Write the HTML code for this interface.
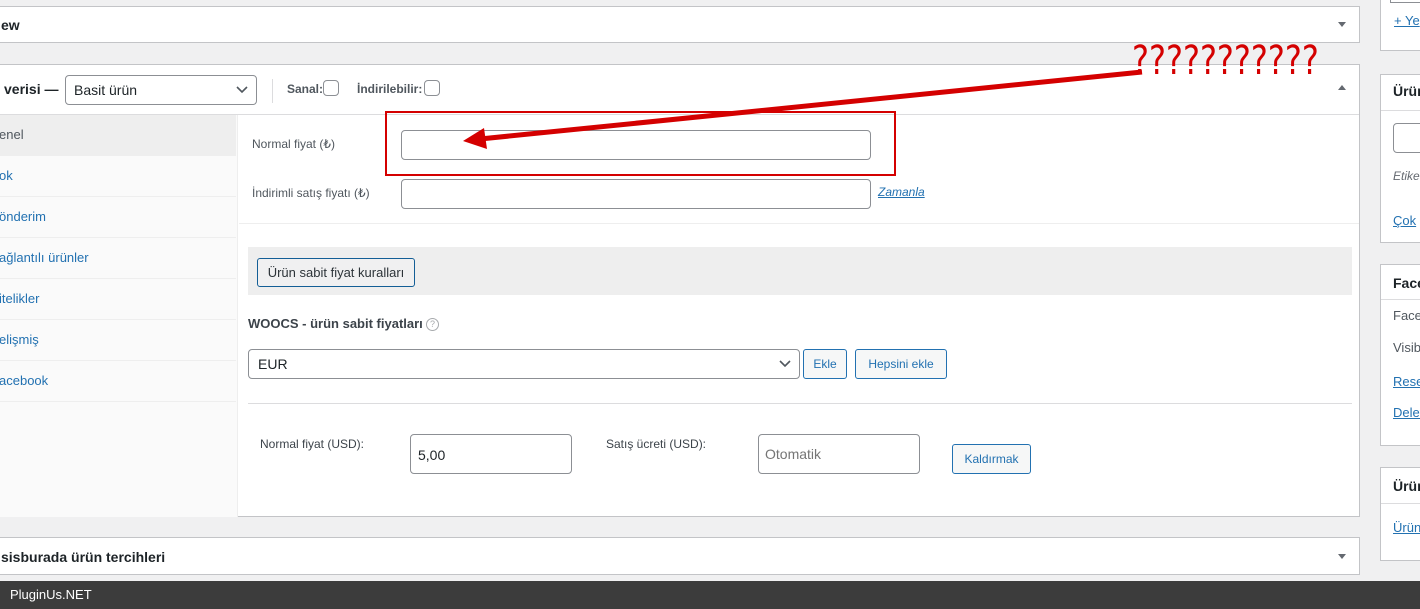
<!DOCTYPE html>
<html><head><meta charset="utf-8"><style>
*{box-sizing:border-box;margin:0;padding:0}
body{width:1420px;height:609px;background:#f0f0f1;font-family:"Liberation Sans",sans-serif;font-size:13px;color:#1d2327;position:relative;overflow:hidden}
.abs{position:absolute}
.panel{position:absolute;background:#fff;border:1px solid #c3c4c7}
.tri-d{width:0;height:0;border-left:4px solid transparent;border-right:4px solid transparent;border-top:5px solid #646970}
.tri-u{width:0;height:0;border-left:4px solid transparent;border-right:4px solid transparent;border-bottom:5px solid #646970}
.inp{position:absolute;background:#fff;border:1px solid #8c8f94;border-radius:4px}
.lbl{position:absolute;font-size:12px;color:#50575e}
.tab{position:absolute;left:0;width:237px;height:41px;border-bottom:1px solid #eee;color:#2271b1;font-size:13px;line-height:40px}
.btn{position:absolute;border:1px solid #2271b1;border-radius:3px;color:#2271b1;background:#f6f7f7;font-size:12px;text-align:center}
a{color:#2271b1;text-decoration:underline}
.cb{position:absolute;width:16px;height:16px;border:1px solid #8c8f94;border-radius:4px;background:#fff}
.side{position:absolute;left:1380px;width:44px;background:#fff;border:1px solid #c3c4c7}
</style></head><body>
<div class="panel" style="left:-2px;top:6px;width:1362px;height:37px"><span class="abs" style="left:2px;top:10px;font-size:14px;font-weight:bold">ew</span><div class="tri-d abs" style="left:1339px;top:15px"></div></div>

<div class="panel" style="left:-2px;top:64px;width:1362px;height:453px">
<div class="abs" style="left:0;top:49px;width:1360px;border-top:1px solid #dcdcde"></div>
<span class="abs" style="left:5px;top:16px;font-size:14px;font-weight:bold">verisi —</span>
<div class="inp" style="left:66px;top:10px;width:192px;height:30px;font-size:14px;padding:6px 8px">Basit ürün<svg class="abs" style="right:8px;top:10px" width="12" height="8"><path d="M1 1l5 5 5-5" stroke="#50575e" stroke-width="1.6" fill="none"/></svg></div>
<div class="abs" style="left:273px;top:14px;height:24px;border-left:1px solid #dcdcde"></div>
<span class="abs" style="left:288px;top:17px;font-size:12px;font-weight:bold;color:#50575e">Sanal:</span><div class="cb" style="left:324px;top:15px"></div>
<span class="abs" style="left:358px;top:17px;font-size:12px;font-weight:bold;color:#50575e">İndirilebilir:</span><div class="cb" style="left:425px;top:15px"></div>
<div class="tri-u abs" style="left:1339px;top:20px"></div>
<div class="abs" style="left:0;top:50px;width:239px;height:402px;background:#fafafa;border-right:1px solid #eee"></div>
<div class="tab" style="top:50px;background:#eee;color:#50575e">enel</div>
<div class="tab" style="top:91px">ok</div>
<div class="tab" style="top:132px">önderim</div>
<div class="tab" style="top:173px">ağlantılı ürünler</div>
<div class="tab" style="top:214px">itelikler</div>
<div class="tab" style="top:255px">elişmiş</div>
<div class="tab" style="top:296px">acebook</div>
<div class="lbl" style="left:253px;top:72px">Normal fiyat (₺)</div>
<div class="inp" style="left:402px;top:65px;width:470px;height:30px"></div>
<div class="lbl" style="left:253px;top:121px">İndirimli satış fiyatı (₺)</div>
<div class="inp" style="left:402px;top:114px;width:470px;height:30px"></div>
<a class="abs" style="left:879px;top:120px;font-size:12px;font-style:italic">Zamanla</a>
<div class="abs" style="left:240px;top:158px;width:1120px;border-top:1px solid #eee"></div>
<div class="abs" style="left:249px;top:182px;width:1104px;height:48px;background:#eeeeee"></div>
<div class="btn" style="left:258px;top:193px;width:158px;height:29px;line-height:27px;border-color:#135e96;color:#2c3338;background:#f0f0f1;font-size:13px">Ürün sabit fiyat kuralları</div>
<div class="abs" style="left:249px;top:251px;font-size:13px;font-weight:bold;color:#3c434a">WOOCS - ürün sabit fiyatları</div>
<div class="abs" style="left:427px;top:253px;width:13px;height:13px;border:1px solid #a7aaad;border-radius:50%;font-size:9px;color:#a7aaad;text-align:center;line-height:11px">?</div>
<div class="inp" style="left:249px;top:284px;width:552px;height:30px;font-size:14px;padding:6px 9px">EUR<svg class="abs" style="right:8px;top:10px" width="12" height="8"><path d="M1 1l5 5 5-5" stroke="#50575e" stroke-width="1.6" fill="none"/></svg></div>
<div class="btn" style="left:804px;top:284px;width:44px;height:30px;line-height:28px">Ekle</div>
<div class="btn" style="left:856px;top:284px;width:92px;height:30px;line-height:28px">Hepsini ekle</div>
<div class="abs" style="left:249px;top:338px;width:1104px;border-top:1px solid #dcdcde"></div>
<div class="lbl" style="left:261px;top:372px;color:#3c434a">Normal fiyat (USD):</div>
<div class="inp" style="left:411px;top:369px;width:162px;height:40px;font-size:14px;padding:12px 7px">5,00</div>
<div class="lbl" style="left:607px;top:372px;color:#3c434a">Satış ücreti (USD):</div>
<div class="inp" style="left:759px;top:369px;width:162px;height:40px;font-size:14px;padding:11px 6px;color:#757575">Otomatik</div>
<div class="btn" style="left:953px;top:379px;width:79px;height:30px;line-height:28px">Kaldırmak</div>
</div>

<div class="panel" style="left:-2px;top:537px;width:1362px;height:38px"><span class="abs" style="left:2px;top:11px;font-size:14px;font-weight:bold">sisburada ürün tercihleri</span><div class="tri-d abs" style="left:1339px;top:16px"></div></div>

<div class="side" style="top:-2px;height:53px"><div class="abs" style="left:9px;top:0;width:40px;height:4px;border:1px solid #8c8f94;border-top:none"></div><a class="abs" style="left:13px;top:14px">+ Ye</a></div>
<div class="side" style="top:74px;height:169px"><b class="abs" style="left:12px;top:8px;font-size:14px">Ürün</b><div class="abs" style="left:0;top:35px;width:44px;border-top:1px solid #dcdcde"></div><div class="inp" style="left:12px;top:48px;width:40px;height:30px"></div><i class="abs" style="left:12px;top:94px;font-size:12px;color:#646970">Etike</i><a class="abs" style="left:12px;top:138px">Çok</a></div>
<div class="side" style="top:264px;height:182px"><b class="abs" style="left:12px;top:10px;font-size:14px">Face</b><div class="abs" style="left:0;top:34px;width:44px;border-top:1px solid #dcdcde"></div><span class="abs" style="left:12px;top:43px;color:#50575e">Facel</span><span class="abs" style="left:12px;top:75px;color:#50575e">Visib</span><a class="abs" style="left:12px;top:109px">Rese</a><a class="abs" style="left:12px;top:140px">Delet</a></div>
<div class="side" style="top:467px;height:94px"><b class="abs" style="left:12px;top:10px;font-size:14px">Ürün</b><div class="abs" style="left:0;top:35px;width:44px;border-top:1px solid #dcdcde"></div><a class="abs" style="left:12px;top:52px">Ürün</a></div>

<div class="abs" style="left:0;top:581px;width:1420px;height:28px;background:#3c3c3c;color:#fff;font-size:13px;padding:6px 10px">PluginUs.NET</div>

<div class="abs" style="left:385px;top:111px;width:511px;height:65px;border:2px solid #d40000"></div>
<svg class="abs" style="left:0;top:0" width="1420" height="609"><line x1="1142" y1="72" x2="480" y2="139" stroke="#d40000" stroke-width="5"/><polygon points="463,141 484,128 487,149" fill="#d40000"/></svg>
<div class="abs" style="left:1132px;top:38px;font-size:40px;color:#d40000;font-family:'DejaVu Sans',sans-serif;transform:scaleX(.8);transform-origin:left">???????????</div>
</body></html>
